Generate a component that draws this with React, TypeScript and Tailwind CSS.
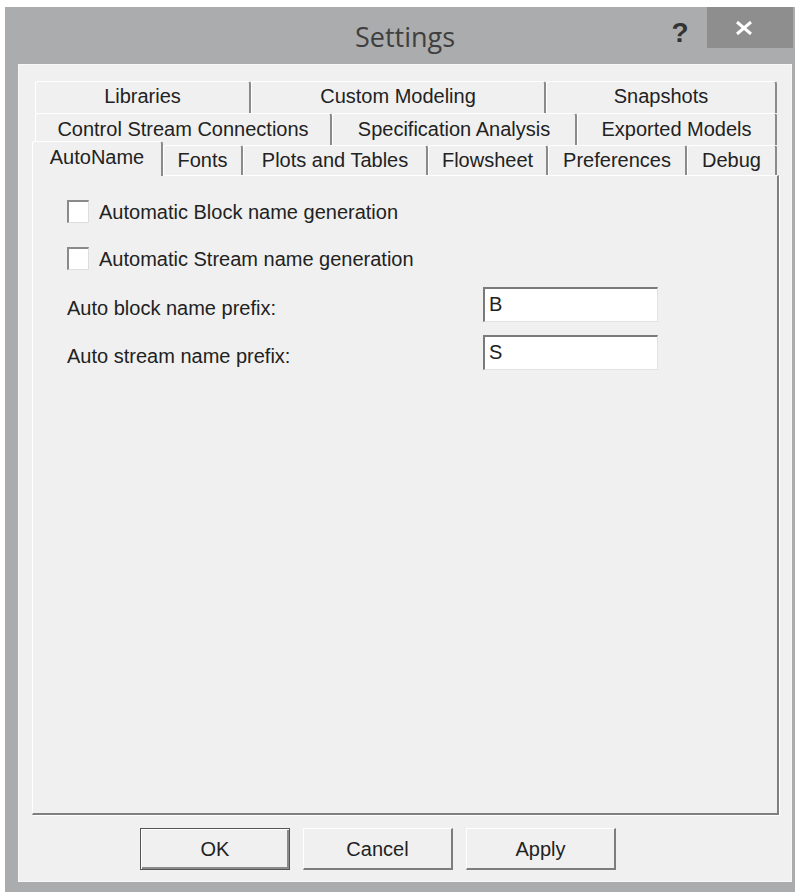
type Tab = { label: string; width: string };

const topRow: Tab[] = [
  { label: "Libraries", width: "w-[216px]" },
  { label: "Custom Modeling", width: "w-[295px]" },
  { label: "Snapshots", width: "w-[231px]" },
];

const middleRow: Tab[] = [
  { label: "Control Stream Connections", width: "w-[297px]" },
  { label: "Specification Analysis", width: "w-[245px]" },
  { label: "Exported Models", width: "w-[200px]" },
];

const frontRow: Tab[] = [
  { label: "AutoName", width: "w-[131px]" },
  { label: "Fonts", width: "w-[80px]" },
  { label: "Plots and Tables", width: "w-[185px]" },
  { label: "Flowsheet", width: "w-[120px]" },
  { label: "Preferences", width: "w-[139px]" },
  { label: "Debug", width: "w-[90px]" },
];

const tabBase =
  "shrink-0 rounded-t-[3px] border-t border-l border-r-2 border-t-white border-l-white border-r-[#8a8a8a] bg-[#f0f0f0] text-center text-[20px] leading-[20px] text-[#222]";

function BackTab({ tab, pad }: { tab: Tab; pad: string }) {
  return <div className={`${tabBase} ${tab.width} h-[32px] ${pad}`}>{tab.label}</div>;
}

function FrontTab({ tab, active }: { tab: Tab; active?: boolean }) {
  return (
    <div
      className={`${tabBase} ${tab.width} ${
        active ? "relative z-10 -mb-px h-[35px] pt-[5px]" : "h-[30px] pt-[4px]"
      }`}
    >
      {tab.label}
    </div>
  );
}

function Checkbox({ label }: { label: string }) {
  return (
    <div className="flex h-[23px] items-center gap-[10px]">
      <span className="h-[23px] w-[22px] border-t-2 border-l-2 border-r border-b border-t-[#8a8a8a] border-l-[#8a8a8a] border-r-[#dedede] border-b-[#dedede] bg-white" />
      <span className="text-[20px] leading-[20px] text-[#222]">{label}</span>
    </div>
  );
}

function PrefixField({ label, value }: { label: string; value: string }) {
  return (
    <div className="flex">
      <span className="w-[416px] pt-[11px] text-[20px] leading-[20px] text-[#222]">{label}</span>
      <div className="h-[35px] w-[175px] border-t-2 border-l-2 border-r border-b border-t-[#7a7a7a] border-l-[#7a7a7a] border-r-[#e2e2e2] border-b-[#e2e2e2] bg-white pl-[4px] pt-[5px] text-[20px] leading-[20px] text-[#222]">
        {value}
      </div>
    </div>
  );
}

function DialogButton({ label, primary }: { label: string; primary?: boolean }) {
  return (
    <button
      type="button"
      className={`h-[42px] w-[150px] bg-[#f0f0f0] text-[20px] leading-[20px] text-[#222] ${
        primary
          ? "border border-[#555] shadow-[inset_1px_1px_0_#ffffff,inset_-2px_-2px_0_#8a8a8a]"
          : "border-t border-l border-r-2 border-b-2 border-t-white border-l-white border-r-[#7d7d7d] border-b-[#7d7d7d]"
      }`}
    >
      {label}
    </button>
  );
}

export default function App() {
  return (
    <div className="h-[892px] w-[795px] overflow-hidden bg-white pl-[5px] pt-[7px] font-['Liberation_Sans',Arial,sans-serif]">
      <div className="flex h-[885px] w-[790px] flex-col bg-[#abacae]">
        {/* title bar */}
        <div className="flex h-[57px] shrink-0 items-start pl-[145px] pr-[2px]">
          <div className="flex-1 pt-[16px] text-center font-['Open_Sans',sans-serif] text-[27px] leading-[27px] text-[#3f3f3f]">
            Settings
          </div>
          <div className="w-[40px] pt-[12px] text-center text-[28px] font-bold leading-[28px] text-[#333]">?</div>
          <div className="ml-[7px] flex h-[41px] w-[86px] items-center justify-center bg-[#8e8e8e] pr-[12px]">
            <svg width="18" height="14" viewBox="0 0 18 14">
              <path d="M2 1 L16 13 M16 1 L2 13" stroke="#fff" strokeWidth="3" />
            </svg>
          </div>
        </div>

        {/* client area */}
        <div className="ml-[13px] mr-[3px] flex h-[818px] flex-col border border-[#f7f7f7] bg-[#f0f0f0] pl-[13px] pt-[16px]">
          <div className="flex pl-[3px]">
            {topRow.map((t) => (
              <BackTab key={t.label} tab={t} pad="pt-[4px]" />
            ))}
          </div>
          <div className="flex pl-[3px]">
            {middleRow.map((t) => (
              <BackTab key={t.label} tab={t} pad="pt-[5px]" />
            ))}
          </div>
          <div className="-mt-[4px] flex h-[34px] items-end">
            {frontRow.map((t, i) => (
              <FrontTab key={t.label} tab={t} active={i === 0} />
            ))}
          </div>

          <div className="flex h-[640px] w-[747px] flex-col border-t border-l border-r-2 border-b-2 border-t-white border-l-white border-r-[#7f7f7f] border-b-[#7f7f7f] bg-[#f0f0f0] pl-[34px] pt-[24px] shadow-[1px_1px_0_#ffffff]">
            <Checkbox label="Automatic Block name generation" />
            <div className="mt-[24px]">
              <Checkbox label="Automatic Stream name generation" />
            </div>
            <div className="mt-[17px]">
              <PrefixField label="Auto block name prefix:" value="B" />
            </div>
            <div className="mt-[13px]">
              <PrefixField label="Auto stream name prefix:" value="S" />
            </div>
          </div>

          <div className="mt-[13px] flex gap-[13px] pl-[108px]">
            <DialogButton label="OK" primary />
            <DialogButton label="Cancel" />
            <DialogButton label="Apply" />
          </div>
        </div>
      </div>
    </div>
  );
}
